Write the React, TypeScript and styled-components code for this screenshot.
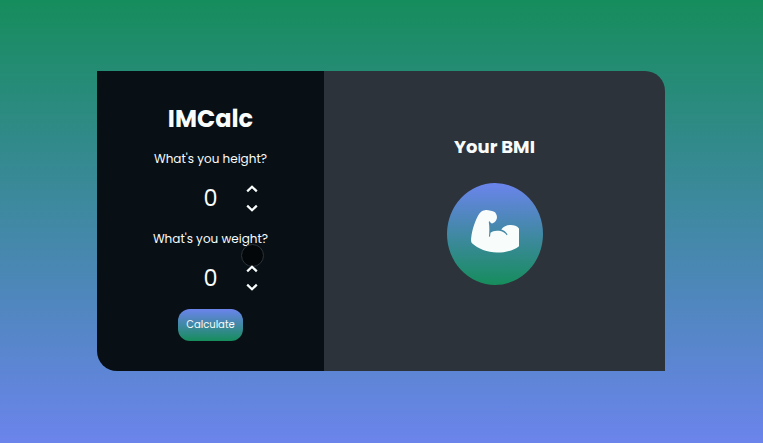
import React from "react";
import styled, { createGlobalStyle } from "styled-components";

const GlobalStyle = createGlobalStyle`
  * { box-sizing: border-box; margin: 0; padding: 0; }
  body { font-family: Poppins, Inter, sans-serif; color: #f8fcfb; }
`;

const Page = styled.main`
  height: 100vh;
  padding: 71px 0 0 97px;
  overflow: hidden;
  background: linear-gradient(#168d5c, #6b84ec);
`;

const Card = styled.div`
  display: grid;
  grid-template-columns: 227px 1fr;
  width: 568px;
  height: 300px;
  border-radius: 0 20px 0 20px;
  overflow: hidden;
`;

const FormPanel = styled.section`
  display: flex;
  flex-direction: column;
  align-items: center;
  padding-top: 29px;
  background: #081016;
`;

const ResultPanel = styled.section`
  display: flex;
  flex-direction: column;
  align-items: center;
  padding-top: 62px;
  background: #2c333b;
`;

const Title = styled.h1`
  font-size: 24px;
  font-weight: 700;
  line-height: 38px;
`;

const Field = styled.div`
  position: relative;
  display: flex;
  flex-direction: column;
  align-items: center;
  width: 100%;
  height: 80px;
  padding-top: 11px;
`;

const Question = styled.label`
  font-size: 12px;
  font-weight: 400;
  line-height: 20px;
`;

const Stepper = styled.div`
  position: relative;
  display: grid;
  grid-template-columns: 1fr 30px 1fr;
  align-items: center;
  width: 100%;
  height: 36px;
  margin-top: 11px;
`;

const Value = styled.output`
  grid-column: 2;
  font-size: 22.4px;
  font-weight: 400;
  line-height: 34px;
  text-align: center;
`;

const Arrows = styled.div<{ $gap: number }>`
  display: flex;
  flex-direction: column;
  gap: ${(p) => p.$gap}px;
  margin-left: 20px;
`;

const Arrow = styled.button`
  width: 12px;
  height: 8px;
  border: 0;
  color: inherit;
  background: none;
  svg { display: block; }
`;

const Cursor = styled.span`
  position: absolute;
  left: 144px;
  top: 26px;
  width: 23px;
  height: 23px;
  border: 1px solid #2c333b;
  border-radius: 50%;
  background: #04070a;
`;

const Calculate = styled.button`
  width: 65px;
  height: 32px;
  margin-top: 11px;
  border: 0;
  border-radius: 12px;
  color: inherit;
  background: linear-gradient(#6b84ec, #168d5c);
  font-family: inherit;
  font-size: 10px;
  font-weight: 400;
  line-height: 30px;
  white-space: nowrap;
`;

const ResultTitle = styled.h2`
  font-size: 18px;
  font-weight: 700;
  line-height: 28px;
`;

const Badge = styled.div`
  display: flex;
  justify-content: center;
  width: 96px;
  height: 102px;
  margin-top: 22px;
  padding-top: 27px;
  border-radius: 50%;
  background: linear-gradient(#6b84ec, #168d5c);
`;

const Chevron = ({ down }: { down?: boolean }) => (
  <svg width="12" height="8" viewBox="0 0 12 8" fill="none" stroke="currentColor" strokeWidth="2.2">
    <path d={down ? "M1.2 1.6 6 6.3 10.8 1.6" : "M1.2 6.4 6 1.7 10.8 6.4"} />
  </svg>
);

const FlexedArm = () => (
  <svg width="48" height="43" viewBox="0 0 48 43" fill="#f8fcfb">
    <path d="M14 .2C17-.2 21 1 24 2.2C25.5 4 26.2 6 25.9 8C25.6 10.5 23.5 13.2 20.8 13.4C19.8 13.2 19 12.1 18.3 11L17.8 12C18.6 17 18.4 22 18 26.6L19 26.8L19.5 22.8C21.5 21 24.5 20.3 28 20.8C31.5 21.3 34 22.7 35.8 25.2L36.5 24.6C35 21.8 33 20.2 30.3 19.4C32.5 16.4 36 15 39.8 15C43 15 46 16 48 18.4V36.2C42.5 40.5 34.5 42.6 26 42.6C16.5 42.3 7 39 .7 33C-.2 31.5 0 29.5.2 27.8C1 20 4.2 9.5 8.8 3C10.2 1.2 12 .4 14 .2Z" />
  </svg>
);

const fields = [
  { question: "What's you height?", gap: 11, cursor: false },
  { question: "What's you weight?", gap: 10, cursor: true },
];

export default function App() {
  return (
    <>
      <GlobalStyle />
      <Page>
        <Card>
          <FormPanel>
            <Title>IMCalc</Title>
            {fields.map((f) => (
              <Field key={f.question}>
                <Question>{f.question}</Question>
                {f.cursor && <Cursor />}
                <Stepper>
                  <Value>0</Value>
                  <Arrows $gap={f.gap}>
                    <Arrow aria-label="Increase"><Chevron /></Arrow>
                    <Arrow aria-label="Decrease"><Chevron down /></Arrow>
                  </Arrows>
                </Stepper>
              </Field>
            ))}
            <Calculate>Calculate</Calculate>
          </FormPanel>
          <ResultPanel>
            <ResultTitle>Your BMI</ResultTitle>
            <Badge><FlexedArm /></Badge>
          </ResultPanel>
        </Card>
      </Page>
    </>
  );
}
